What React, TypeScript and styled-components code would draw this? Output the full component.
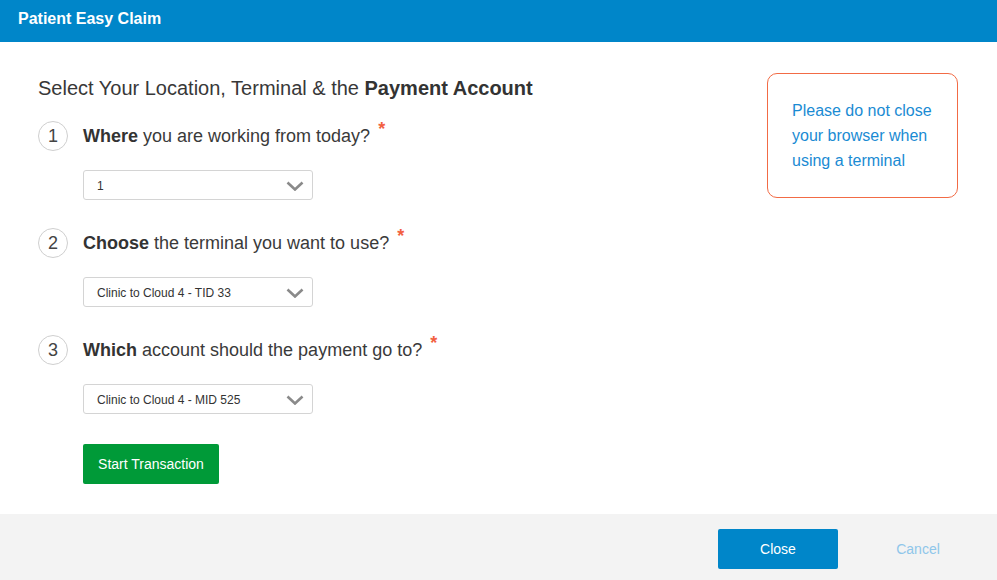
import React from "react";
import styled, { createGlobalStyle } from "styled-components";

const Global = createGlobalStyle`
  html, body { margin: 0; padding: 0; background: #fff; }
  body { font-family: "Liberation Sans", Arial, sans-serif; }
  * { box-sizing: border-box; }
`;

const Page = styled.div`
  width: 997px;
  height: 580px;
  display: flex;
  flex-direction: column;
  background: #fff;
`;

const Header = styled.header`
  height: 42px;
  background: #0086c9;
  color: #fff;
  font-weight: bold;
  font-size: 16px;
  display: flex;
  align-items: center;
  padding: 0 0 4px 18px;
`;

const Main = styled.main`
  flex: 1;
  display: flex;
  justify-content: space-between;
  padding: 31px 39px 0 38px;
`;

const Left = styled.div`
  display: flex;
  flex-direction: column;
  padding-top: 3px;
`;

const Heading = styled.h1`
  margin: 0 0 21px;
  font-size: 20px;
  line-height: 24px;
  font-weight: normal;
  color: #383838;
  b { font-weight: bold; color: #333; }
`;

const Step = styled.div`
  display: flex;
  flex-direction: column;
  margin-bottom: 28px;
`;

const StepRow = styled.div`
  display: flex;
  align-items: center;
  gap: 15px;
  height: 30px;
  margin-bottom: 19px;
`;

const Circle = styled.div`
  width: 30px;
  height: 30px;
  border-radius: 50%;
  border: 1px solid #cfcfcf;
  display: flex;
  align-items: center;
  justify-content: center;
  font-size: 18px;
  color: #444;
`;

const Label = styled.div`
  font-size: 18px;
  color: #3a3a3a;
  b { color: #333; }
`;

const Star = styled.span`
  color: #f2603f;
  font-size: 18px;
  font-weight: bold;
  position: relative;
  top: -7px;
  margin-left: 8px;
`;

const Select = styled.div`
  margin-left: 45px;
  width: 230px;
  height: 30px;
  border: 1px solid #d4d4d4;
  border-radius: 3px;
  display: flex;
  align-items: center;
  justify-content: space-between;
  padding: 1px 8px 0 13px;
  font-size: 12px;
  color: #333;
`;

const StartButton = styled.button`
  margin: 2px 0 0 45px;
  width: 136px;
  height: 40px;
  border: none;
  border-radius: 2px;
  background: #009a38;
  color: #fff;
  font-family: "Liberation Sans", Arial, sans-serif;
  font-size: 14px;
  cursor: pointer;
`;

const Notice = styled.div`
  width: 191px;
  height: 125px;
  border: 1px solid #f26b45;
  border-radius: 10px;
  padding: 24px 20px 0 24px;
  color: #1a8bd3;
  font-size: 16px;
  line-height: 25px;
`;

const Footer = styled.footer`
  height: 66px;
  background: #f3f3f3;
  display: flex;
  align-items: flex-start;
  justify-content: flex-end;
  gap: 20px;
  padding: 15px 19px 0 0;
`;

const CloseButton = styled.button`
  width: 120px;
  height: 40px;
  border: none;
  border-radius: 2px;
  background: #0086c9;
  color: #fff;
  font-family: "Liberation Sans", Arial, sans-serif;
  font-size: 14px;
`;

const CancelButton = styled.button`
  width: 120px;
  height: 40px;
  border: none;
  background: transparent;
  color: #8fc6ea;
  font-family: "Liberation Sans", Arial, sans-serif;
  font-size: 14px;
`;

const Chevron = () => (
  <svg width="18" height="10" viewBox="0 0 18 10">
    <path d="M1.5 1.5 L9 8.5 L16.5 1.5" fill="none" stroke="#8a8a8a" strokeWidth="2.6" />
  </svg>
);

const steps = [
  { n: 1, bold: "Where", rest: " you are working from today?", value: "1" },
  { n: 2, bold: "Choose", rest: " the terminal you want to use?", value: "Clinic to Cloud 4 - TID 33" },
  { n: 3, bold: "Which", rest: " account should the payment go to?", value: "Clinic to Cloud 4 - MID 525" },
];

export default function App() {
  return (
    <Page>
      <Global />
      <Header>Patient Easy Claim</Header>
      <Main>
        <Left>
          <Heading>
            Select Your Location, Terminal &amp; the <b>Payment Account</b>
          </Heading>
          {steps.map((s) => (
            <Step key={s.n}>
              <StepRow>
                <Circle>{s.n}</Circle>
                <Label>
                  <b>{s.bold}</b>
                  {s.rest}
                  <Star>*</Star>
                </Label>
              </StepRow>
              <Select>
                <span>{s.value}</span>
                <Chevron />
              </Select>
            </Step>
          ))}
          <StartButton>Start Transaction</StartButton>
        </Left>
        <Notice>Please do not close your browser when using a terminal</Notice>
      </Main>
      <Footer>
        <CloseButton>Close</CloseButton>
        <CancelButton>Cancel</CancelButton>
      </Footer>
    </Page>
  );
}
